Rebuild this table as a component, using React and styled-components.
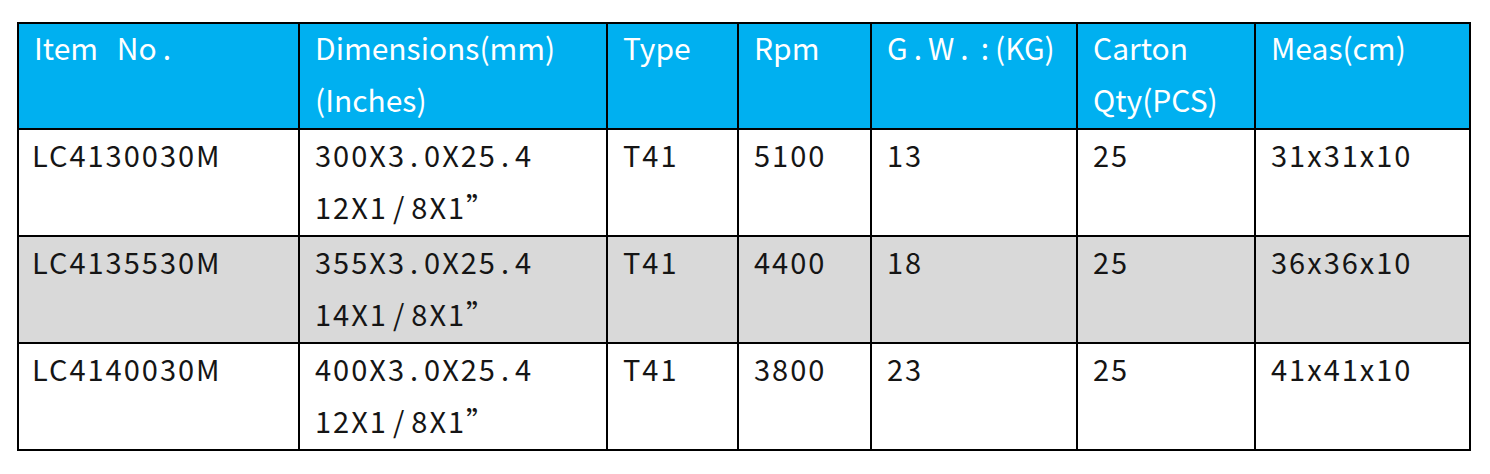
import React from 'react';
import styled, { createGlobalStyle } from 'styled-components';

const GlobalStyle = createGlobalStyle`
    html, body {
        margin: 0;
        padding: 0;
        background: #ffffff;
    }
    body {
        font-family: "Noto Sans CJK SC", "Noto Sans", sans-serif;
    }
`

const Page = styled.div`
    padding: 22px 0 0 17px;
`

const Table = styled.table`
    border-collapse: collapse;
    table-layout: fixed;
    width: 1452px;
`

const HeadRow = styled.tr`
    height: 106px;
    background: #00b0f0;
`

const BodyRow = styled.tr`
    height: 107px;
    background: ${props => props.$shaded ? '#d9d9d9' : '#ffffff'};
`

const HeadCell = styled.th`
    border: 2px solid #000;
    vertical-align: top;
    text-align: left;
    padding: 0 0 0 15px;
    color: #ffffff;
    font-weight: 400;
    font-size: 30px;
    line-height: 52px;
`

const Cell = styled.td`
    border: 2px solid #000;
    vertical-align: top;
    text-align: left;
    padding: 0 0 0 ${props => props.$first ? '13px' : '15px'};
    color: #151515;
    font-size: 29px;
    font-weight: 400;
    line-height: 52px;
    letter-spacing: 2px;
`

const Lines = styled.div`
    margin-top: -${props => props.$lift || 0}px;
`

const Wide = styled.span`
    padding: 0 ${props => props.$pad}px;
`

const widen = (text, pad) =>
    text.split(/([.:/ ])/).map((part, i) =>
        /^[.:/ ]$/.test(part) ? <Wide key={i} $pad={pad}>{part}</Wide> : part
    );

const widths = [281, 308, 131, 133, 206, 178, 215];

const headers = [
    ['Item No.'],
    ['Dimensions(mm)', '(Inches)'],
    ['Type'],
    ['Rpm'],
    ['G.W.:(KG)'],
    ['Carton', 'Qty(PCS)'],
    ['Meas(cm)'],
];

const rows = [
    { item: 'LC4130030M', mm: '300X3.0X25.4', inch: '12X1/8X1”', type: 'T41', rpm: '5100', gw: '13', qty: '25', meas: '31x31x10' },
    { item: 'LC4135530M', mm: '355X3.0X25.4', inch: '14X1/8X1”', type: 'T41', rpm: '4400', gw: '18', qty: '25', meas: '36x36x10', shaded: true },
    { item: 'LC4140030M', mm: '400X3.0X25.4', inch: '12X1/8X1”', type: 'T41', rpm: '3800', gw: '23', qty: '25', meas: '41x41x10' },
];

const App = () => {
    return (
        <Page>
            <GlobalStyle />
            <Table>
                <colgroup>
                    {widths.map((w, i) => <col key={i} style={{ width: w }} />)}
                </colgroup>
                <thead>
                    <HeadRow>
                        {headers.map((lines, i) => (
                            <HeadCell key={i}>
                                <Lines $lift={3}>
                                    {lines.map((l, j) => <div key={j}>{widen(l, 6)}</div>)}
                                </Lines>
                            </HeadCell>
                        ))}
                    </HeadRow>
                </thead>
                <tbody>
                    {rows.map(r => (
                        <BodyRow key={r.item} $shaded={r.shaded}>
                            <Cell $first><Lines $lift={2}>{r.item}</Lines></Cell>
                            <Cell>
                                <Lines $lift={2}>
                                    <div>{widen(r.mm, 4)}</div>
                                    <div>{widen(r.inch, 5)}</div>
                                </Lines>
                            </Cell>
                            <Cell><Lines $lift={2}>{r.type}</Lines></Cell>
                            <Cell><Lines $lift={2}>{r.rpm}</Lines></Cell>
                            <Cell><Lines $lift={2}>{r.gw}</Lines></Cell>
                            <Cell><Lines $lift={2}>{r.qty}</Lines></Cell>
                            <Cell><Lines $lift={2}>{r.meas}</Lines></Cell>
                        </BodyRow>
                    ))}
                </tbody>
            </Table>
        </Page>
    );
}

export default App;
